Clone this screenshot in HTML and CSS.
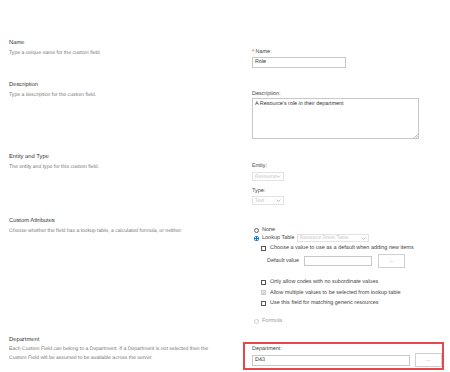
FILE: index.html
```html
<!DOCTYPE html>
<html lang="en">
<head>
    <meta charset="UTF-8">
    <title>Edit Custom Field</title>
    <link rel="stylesheet" href="styles.css">
</head>
<body>
    <div class="page">

        <!-- Name -->
        <div class="section sec-name">
            <div class="info">
                <h2>Name</h2>
                <p>Type a unique name for the custom field.</p>
            </div>
            <div class="field">
                <div class="label"><span class="req">*</span> Name:</div>
                <div class="textbox name-box">Role</div>
            </div>
        </div>

        <!-- Description -->
        <div class="section sec-desc">
            <div class="info">
                <h2>Description</h2>
                <p>Type a description for the custom field.</p>
            </div>
            <div class="field">
                <div class="label">Description:</div>
                <div class="textarea">A Resource's role in their department
                    <svg class="grip" width="5" height="5" viewBox="0 0 5 5"><path d="M5 1 L1 5 M5 3 L3 5" stroke="#999" stroke-width="0.6"/></svg>
                </div>
            </div>
        </div>

        <!-- Entity and Type -->
        <div class="section sec-entity">
            <div class="info">
                <h2>Entity and Type</h2>
                <p>The entity and type for this custom field.</p>
            </div>
            <div class="field">
                <div class="label">Entity:</div>
                <div class="select small">Resource <svg class="chev" width="5" height="3" viewBox="0 0 5 3"><path d="M0.5 0.5 L2.5 2.5 L4.5 0.5" fill="none" stroke="#aaa" stroke-width="0.7"/></svg></div>
                <div class="label type-label">Type:</div>
                <div class="select small">Text <svg class="chev" width="5" height="3" viewBox="0 0 5 3"><path d="M0.5 0.5 L2.5 2.5 L4.5 0.5" fill="none" stroke="#aaa" stroke-width="0.7"/></svg></div>
            </div>
        </div>

        <!-- Custom Attributes -->
        <div class="section sec-custom">
            <div class="info">
                <h2>Custom Attributes</h2>
                <p>Choose whether the field has a lookup table, a calculated formula, or neither.</p>
            </div>
            <div class="field">
                <div class="opt radio-row"><span class="radio"></span>None</div>
                <div class="opt radio-row"><span class="radio checked"></span>Lookup Table
                    <div class="select lookup">Resource Roles Table <svg class="chev" width="5" height="3" viewBox="0 0 5 3"><path d="M0.5 0.5 L2.5 2.5 L4.5 0.5" fill="none" stroke="#aaa" stroke-width="0.7"/></svg></div>
                </div>
                <div class="opt check-row first"><span class="check"></span>Choose a value to use as a default when adding new items</div>
                <div class="default-row">
                    <span class="opt default-label">Default value</span>
                    <div class="textbox default-box"></div>
                    <div class="btn">...</div>
                </div>
                <div class="check-list">
                    <div class="opt check-row"><span class="check"></span>Only allow codes with no subordinate values</div>
                    <div class="opt check-row disabled"><span class="check on"><svg width="4" height="4" viewBox="0 0 4 4"><path d="M0.6 2 L1.6 3 L3.4 0.9" fill="none" stroke="#999" stroke-width="0.6"/></svg></span>Allow multiple values to be selected from lookup table</div>
                    <div class="opt check-row"><span class="check"></span>Use this field for matching generic resources</div>
                </div>
                <div class="opt radio-row formula"><span class="radio off"></span>Formula</div>
            </div>
        </div>

        <!-- Department -->
        <div class="section sec-dept">
            <div class="info">
                <h2>Department</h2>
                <p>Each Custom Field can belong to a Department. If a Department is not selected then the Custom Field will be assumed to be available across the server.</p>
            </div>
            <div class="field dept-box">
                <div class="label">Department:</div>
                <div class="dept-row">
                    <div class="textbox dept-input">D43</div>
                    <div class="btn dept-btn">...</div>
                </div>
            </div>
        </div>

    </div>
</body>
</html>
```

FILE: styles.css
```css
body {
    margin: 0;
    background-color: #fff;
    font-family: "Liberation Sans", Arial, sans-serif;
    color: #444;
    text-rendering: geometricPrecision;
}

.page {
    padding: 39px 0 0 9px;
}

.section {
    display: grid;
    grid-template-columns: 234px 201px;
}

.info h2 {
    margin: 0;
    font-size: 5.8px;
    line-height: 8px;
    font-weight: normal;
    color: #333;
}

.info p {
    margin: 2px 0 0 0;
    font-size: 5.1px;
    line-height: 8.5px;
    color: #777;
}

.sec-dept .info p {
    margin-top: 1px;
    line-height: 9px;
    padding-right: 24px;
}

.field {
    padding: 9px 0 0 9px;
}

.sec-name { padding-bottom: 13px; }
.sec-desc { padding-bottom: 14px; }
.sec-entity { padding-bottom: 12px; }
.sec-custom { padding-bottom: 11px; }

.label {
    font-size: 5.4px;
    line-height: 8px;
    color: #444;
}

.req {
    color: #d13438;
}

.textbox {
    box-sizing: border-box;
    border: 1px solid #c8c8c8;
    background: #fff;
    font-size: 5.4px;
    color: #333;
    padding-left: 2px;
}

.name-box {
    margin-top: 1px;
    width: 94px;
    height: 11px;
    line-height: 9px;
}

.textarea {
    position: relative;
    box-sizing: border-box;
    width: 167px;
    height: 41px;
    border: 1px solid #c8c8c8;
    font-size: 5.4px;
    line-height: 8px;
    padding: 1px 2px;
    color: #333;
}

.grip {
    position: absolute;
    right: 0;
    bottom: 0;
}

.select {
    box-sizing: border-box;
    display: flex;
    align-items: center;
    justify-content: space-between;
    border: 1px solid #e3e3e3;
    color: #c4c4c4;
    font-size: 5px;
    padding: 0 2px;
}

.select.small {
    width: 32px;
    height: 9px;
    margin-top: 2px;
}

.type-label {
    margin-top: 6px;
}

.sec-entity .type-label + .select {
    margin-top: 1px;
}

.opt {
    font-size: 5.5px;
    line-height: 8px;
    color: #444;
}

.radio-row, .check-row {
    display: flex;
    align-items: center;
    height: 8px;
}

.radio-row {
    padding-left: 2px;
}

.radio {
    box-sizing: border-box;
    width: 5px;
    height: 5px;
    border: 0.7px solid #666;
    border-radius: 50%;
    margin-right: 3px;
    flex-shrink: 0;
}

.radio.checked {
    border: none;
    background: radial-gradient(circle, #0078d4 1.1px, #fff 1.3px, #fff 1.7px, #0078d4 1.9px);
}

.radio.off {
    border-color: #d0d0d0;
}

.formula {
    margin-top: 10px;
    color: #999;
}

.select.lookup {
    width: 72px;
    height: 8px;
    margin-left: 2px;
}

.check-row {
    padding-left: 9px;
}

.check-row.first {
    margin-top: 2px;
}

.check {
    box-sizing: border-box;
    width: 5px;
    height: 5px;
    border: 0.7px solid #555;
    margin-right: 4px;
    flex-shrink: 0;
    display: flex;
    align-items: center;
    justify-content: center;
}

.check.on {
    border-color: #ccc;
    background: #e6e6e6;
}

.default-row {
    display: flex;
    align-items: center;
    height: 14px;
    margin-top: 2px;
    padding-left: 15px;
}

.default-label {
    width: 37px;
    flex-shrink: 0;
}

.default-box {
    width: 68px;
    height: 10px;
}

.btn {
    box-sizing: border-box;
    width: 27px;
    height: 14px;
    border: 1px solid #cfcfcf;
    background: #fff;
    font-size: 5px;
    color: #666;
    display: flex;
    align-items: center;
    justify-content: center;
    margin-left: 6px;
}

.check-list {
    margin-top: 10px;
    display: flex;
    flex-direction: column;
    gap: 2.5px;
}

.dept-box {
    margin-top: 6px;
    box-sizing: border-box;
    height: 28px;
    border: 2px solid #e5484d;
    padding: 1px 0 0 7px;
}

.dept-row {
    display: flex;
    align-items: center;
    height: 14px;
}

.dept-input {
    width: 158px;
    height: 11px;
    line-height: 9px;
}

.dept-btn {
    margin-left: 5px;
    height: 14px;
}
```
